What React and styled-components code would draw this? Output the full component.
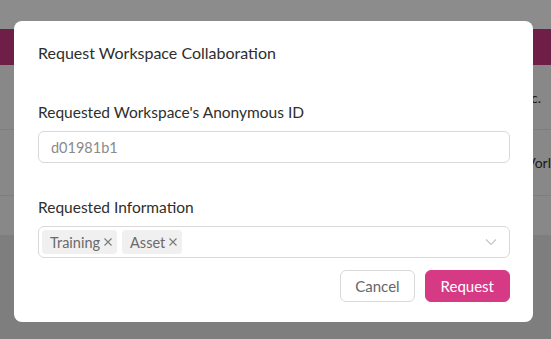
import React from 'react';
import styled, { createGlobalStyle } from 'styled-components';

const GlobalStyle = createGlobalStyle`
  html, body {
    margin: 0;
    padding: 0;
    height: 100%;
    overflow: hidden;
    font-family: 'Lato', 'Noto Sans', sans-serif;
  }
  * { box-sizing: border-box; }
`;

const Page = styled.div`
  width: 551px;
  height: 339px;
  background: #ffffff;
  display: flex;
  flex-direction: column;
`;

const TopBar = styled.div`
  height: 29px;
  background: #ffffff;
`;

const Banner = styled.div`
  height: 36px;
  background: #ca3883;
`;

const Table = styled.div`
  display: flex;
  flex-direction: column;
  background: #f7f7f7;
`;

const Row = styled.div`
  height: ${(p) => p.h}px;
  border-bottom: ${(p) => (p.last ? 'none' : '1px solid #e6e6e6')};
  display: flex;
  align-items: center;
  justify-content: flex-end;
  padding-right: ${(p) => p.pad}px;
  font-size: 14px;
  color: #333;
`;

const Rest = styled.div`
  flex: 1;
  background: #e6e6e6;
`;

const Overlay = styled.div`
  position: fixed;
  inset: 0;
  background: rgba(0, 0, 0, 0.45);
`;

const Modal = styled.div`
  position: fixed;
  left: 14px;
  top: 21px;
  width: 519px;
  height: 301px;
  background: #fff;
  border-radius: 8px;
  padding: 19px 23px 0 24px;
  display: flex;
  flex-direction: column;
  color: #333;
`;

const Title = styled.div`
  font-size: 16px;
  line-height: 26px;
  color: #2e2e2e;
`;

const Label = styled.div`
  font-size: 15.5px;
  line-height: 22px;
  margin-top: ${(p) => p.top}px;
  margin-bottom: 8px;
  color: #2e2e2e;
`;

const Field = styled.div`
  height: 32px;
  border: 1px solid #d9d9d9;
  border-radius: 6px;
  display: flex;
  align-items: center;
  padding: 0 ${(p) => (p.select ? 12 : 11)}px 0 ${(p) => (p.select ? 3 : 12)}px;
  font-size: 14.5px;
  color: #8a8a8a;
`;

const Tags = styled.div`
  display: flex;
  gap: 5px;
  flex: 1;
`;

const Tag = styled.span`
  height: 24px;
  background: #f0f0f0;
  border-radius: 4px;
  display: inline-flex;
  align-items: center;
  gap: 3px;
  padding: 0 4px 0 8px;
  font-size: 14.5px;
  color: #6a6a6a;
`;

const Chevron = () => (
  <svg width="12" height="12" viewBox="0 0 12 12" fill="none">
    <path d="M1 3.5 L6 8.5 L11 3.5" stroke="#c4c4c4" strokeWidth="1.1" />
  </svg>
);

const CloseIcon = () => (
  <svg width="10" height="10" viewBox="0 0 10 10" fill="none">
    <path d="M1.5 1.5 L8.5 8.5 M8.5 1.5 L1.5 8.5" stroke="#7a7a7a" strokeWidth="1.1" />
  </svg>
);

const Footer = styled.div`
  display: flex;
  justify-content: flex-end;
  gap: 10px;
  margin-top: 12px;
`;

const Button = styled.button`
  height: 32px;
  padding: 0 ${(p) => (p.primary ? 15 : 14)}px;
  border-radius: 6px;
  font-family: inherit;
  font-size: 15px;
  border: 1px solid ${(p) => (p.primary ? '#d63a85' : '#d9d9d9')};
  background: ${(p) => (p.primary ? '#d63a85' : '#fff')};
  color: ${(p) => (p.primary ? '#fff' : '#666')};
`;

export default function App() {
  return (
    <>
      <GlobalStyle />
      <Page>
        <TopBar />
        <Banner />
        <Table>
          <Row h={65} pad={10}>c.</Row>
          <Row h={66} pad={0}>Vorl</Row>
          <Row h={39} last />
        </Table>
        <Rest />
      </Page>
      <Overlay />
      <Modal>
        <Title>Request Workspace Collaboration</Title>
        <Label top={35}>Requested Workspace's Anonymous ID</Label>
        <Field>d01981b1</Field>
        <Label top={33}>Requested Information</Label>
        <Field select>
          <Tags>
            <Tag>Training <CloseIcon /></Tag>
            <Tag>Asset <CloseIcon /></Tag>
          </Tags>
          <Chevron />
        </Field>
        <Footer>
          <Button>Cancel</Button>
          <Button primary>Request</Button>
        </Footer>
      </Modal>
    </>
  );
}
